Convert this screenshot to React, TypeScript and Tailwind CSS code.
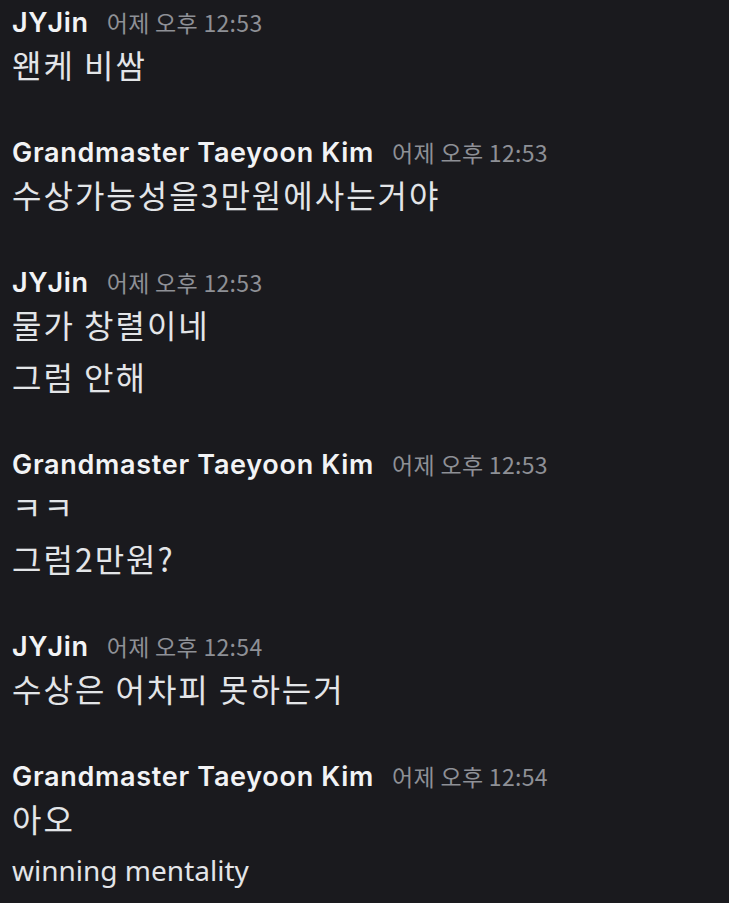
import React from "react";

type Group = { name: string; time: string; lines: { text: string; en?: boolean }[] };

const groups: Group[] = [
  { name: "JYJin", time: "어제 오후 12:53", lines: [{ text: "왠케 비쌈" }] },
  { name: "Grandmaster Taeyoon Kim", time: "어제 오후 12:53", lines: [{ text: "수상가능성을3만원에사는거야" }] },
  { name: "JYJin", time: "어제 오후 12:53", lines: [{ text: "물가 창렬이네" }, { text: "그럼 안해" }] },
  { name: "Grandmaster Taeyoon Kim", time: "어제 오후 12:53", lines: [{ text: "ㅋㅋ" }, { text: "그럼2만원?" }] },
  { name: "JYJin", time: "어제 오후 12:54", lines: [{ text: "수상은 어차피 못하는거" }] },
  { name: "Grandmaster Taeyoon Kim", time: "어제 오후 12:54", lines: [{ text: "아오" }, { text: "winning mentality", en: true }] },
];

export default function App() {
  return (
    <div className="w-[729px] h-[903px] overflow-hidden bg-[#1a1a1e] pl-3 pt-[5px]">
      <div className="flex flex-col gap-[46px]">
        {groups.map((g, i) => (
          <div key={i} className="flex flex-col">
            <div className="flex items-baseline h-[34px] leading-[34px]">
              <span className="text-[27px] font-semibold text-[#f2f3f5] [font-family:Inter,'Noto_Sans_CJK_KR',sans-serif] tracking-[0.7px]">
                {g.name}
              </span>
              <span className="ml-[18px] text-[23px] tracking-[0.3px] text-[#8e9096] [font-family:'Noto_Sans_CJK_KR',sans-serif]">
                {g.time}
              </span>
            </div>
            {g.lines.map((l, j) => (
              <div
                key={j}
                className={
                  (j > 0 ? "mt-[2px] " : "") +
                  "h-[50px] leading-[50px] text-[#e3e5e8] whitespace-nowrap"
                }
              >
                {l.en ? (
                  <span className="text-[28px] [font-family:'Noto_Sans',sans-serif]">{l.text}</span>
                ) : (
                  <span className="text-[32px] tracking-[2px] [font-family:'Noto_Sans_CJK_KR',sans-serif]">{l.text}</span>
                )}
              </div>
            ))}
          </div>
        ))}
      </div>
    </div>
  );
}
